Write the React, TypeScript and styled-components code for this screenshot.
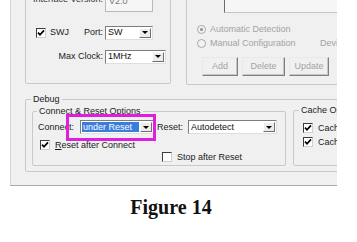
import React from "react";
import styled, { createGlobalStyle } from "styled-components";

const GlobalStyle = createGlobalStyle`
  html, body {
    margin: 0;
    padding: 0;
    background: #fff;
  }
  body {
    font-family: "Liberation Sans", Arial, sans-serif;
  }
`;

const Page = styled.div`
  width: 357px;
  height: 242px;
  overflow: hidden;
  background: #fff;
`;

const Shot = styled.div`
  margin-left: 10px;
  width: 326px;
  height: 185px;
  border-left: 1px solid #d6d6d6;
  border-bottom: 1px solid #a9a9a9;
  background: #f0f0f0;
  overflow: hidden;
  font-size: 9px;
  line-height: 11px;
  color: #1b1b1b;
`;

const TopRow = styled.div`
  display: flex;
  align-items: flex-start;
  gap: 15px;
  height: 85px;
  padding-left: 14px;
`;

const Panel = styled.div<{ $w: number; $h: number }>`
  flex: none;
  box-sizing: border-box;
  width: ${({ $w }) => $w}px;
  height: ${({ $h }) => $h}px;
  margin-top: -14px;
  border: 1px solid #c9c9c9;
  border-radius: 2px;
  display: flex;
  flex-direction: column;
`;

const FieldRow = styled.div<{ $top: number }>`
  display: grid;
  grid-template-columns: 77px auto;
  column-gap: 2px;
  align-items: center;
  height: 15px;
  margin-top: ${({ $top }) => $top}px;
`;

const RightLabel = styled.span`
  text-align: right;
  white-space: nowrap;
`;

const TopLabel = styled(RightLabel)`
  align-self: start;
  margin-top: -3px;
  color: #333;
`;

const SwjCell = styled.div`
  display: flex;
  align-items: center;
  padding-left: 10px;
  gap: 4px;
  white-space: nowrap;
`;

const Spacer = styled.span`
  flex: 1;
`;

const TextBox = styled.div<{ $w: number }>`
  box-sizing: border-box;
  width: ${({ $w }) => $w}px;
  height: 14px;
  border: 1px solid #b9b9b9;
  background: #f6f6f6;
  color: #777;
  padding: 0 3px;
  line-height: 4px;
`;

const Combo = styled.div<{ $w: number }>`
  position: relative;
  box-sizing: border-box;
  width: ${({ $w }) => $w}px;
  height: 14px;
  display: flex;
  align-items: stretch;
  background: #fff;
  border: 1px solid;
  border-color: #7c7c7c #dedede #dedede #7c7c7c;
`;

const ComboValue = styled.span<{ $selected?: boolean }>`
  flex: 1;
  margin: 1px;
  padding-left: 1px;
  display: flex;
  align-items: center;
  white-space: nowrap;
  background: ${({ $selected }) => ($selected ? "#3a7ddb" : "transparent")};
  color: ${({ $selected }) => ($selected ? "#fff" : "#111")};
`;

const ComboArrow = styled.span`
  flex: none;
  box-sizing: border-box;
  width: 12px;
  margin: 1px 1px 1px 0;
  display: flex;
  align-items: center;
  justify-content: center;
  background: #ececec;
  border: 1px solid;
  border-color: #fdfdfd #6f6f6f #6f6f6f #fdfdfd;

  &::after {
    content: "";
    border-left: 3px solid transparent;
    border-right: 3px solid transparent;
    border-top: 3px solid #000;
  }
`;

const Highlight = styled.div`
  position: absolute;
  left: -15px;
  top: -7px;
  width: 90px;
  height: 27px;
  box-sizing: border-box;
  border: 3px solid #e11ee0;
  pointer-events: none;
`;

const Box = styled.span`
  flex: none;
  box-sizing: border-box;
  width: 10px;
  height: 10px;
  background: #fff;
  border: 1px solid;
  border-color: #3c3c3c #cfcfcf #cfcfcf #3c3c3c;
  display: flex;
  align-items: center;
  justify-content: center;
`;

const TabEdge = styled.div`
  flex: none;
  margin-left: 37px;
  height: 26px;
  box-sizing: border-box;
  border-left: 1px solid #6c6c6c;
  border-bottom: 1px solid #c4c4c4;
  background: #f6f6f6;
`;

const RadioRow = styled.div<{ $top: number }>`
  display: grid;
  grid-template-columns: 9px 106px auto;
  column-gap: 4px;
  align-items: center;
  height: 11px;
  padding-left: 10px;
  margin-top: ${({ $top }) => $top}px;
  color: #a3a3a3;
  white-space: nowrap;
`;

const Radio = styled.span<{ $on?: boolean }>`
  box-sizing: border-box;
  width: 9px;
  height: 9px;
  border-radius: 50%;
  border: 1px solid #a7a7a7;
  background: #f3f3f3;
  display: flex;
  align-items: center;
  justify-content: center;

  &::after {
    content: "";
    display: ${({ $on }) => ($on ? "block" : "none")};
    width: 3px;
    height: 3px;
    border-radius: 50%;
    background: #8d8d8d;
  }
`;

const ButtonRow = styled.div`
  display: flex;
  gap: 4px;
  margin-top: 8px;
  padding-left: 15px;
`;

const Button = styled.div<{ $w: number }>`
  box-sizing: border-box;
  width: ${({ $w }) => $w}px;
  height: 19px;
  display: flex;
  align-items: center;
  justify-content: center;
  background: #f0f0f0;
  color: #a3a3a3;
  border: 1px solid;
  border-color: #e9e9e9 #7f7f7f #7f7f7f #e9e9e9;
  box-shadow: inset -1px -1px 0 #c6c6c6;
`;

const Group = styled.fieldset<{ $w: number; $h: number; $top?: number; $left?: number }>`
  flex: none;
  box-sizing: border-box;
  margin: ${({ $top = 0 }) => $top}px 0 0 ${({ $left = 0 }) => $left}px;
  padding: 0;
  min-width: 0;
  width: ${({ $w }) => $w}px;
  height: ${({ $h }) => $h}px;
  border: 1px solid #c9c9c9;
  border-radius: 2px;
`;

const Legend = styled.legend<{ $left: number }>`
  margin-left: ${({ $left }) => $left}px;
  padding: 0 2px;
  font-size: 9px;
  line-height: 11px;
  white-space: nowrap;
`;

const DebugBody = styled.div`
  display: flex;
  align-items: flex-start;
  gap: 7px;
  padding-left: 6px;
`;

const ConnectRow = styled.div`
  display: flex;
  align-items: center;
  height: 14px;
  margin-top: 3px;
  padding-left: 5px;
`;

const Label = styled.span<{ $w: number; $left?: number }>`
  flex: none;
  width: ${({ $w }) => $w}px;
  margin-left: ${({ $left = 0 }) => $left}px;
  white-space: nowrap;
`;

const CheckRow = styled.div<{ $top: number; $left: number }>`
  display: flex;
  align-items: center;
  gap: 5px;
  height: 10px;
  margin-top: ${({ $top }) => $top}px;
  padding-left: ${({ $left }) => $left}px;
  white-space: nowrap;
`;

const Key = styled.span`
  text-decoration: underline;
`;

const Caption = styled.div`
  width: 342px;
  margin-top: 10px;
  text-align: center;
  font-family: "Liberation Serif", "Times New Roman", serif;
  font-weight: bold;
  font-size: 20px;
  line-height: 22px;
  color: #111;
`;

const Check = () => (
  <svg width="8" height="8" viewBox="0 0 8 8">
    <path d="M1 3.6 L3 5.8 L7 1.4" fill="none" stroke="#000" strokeWidth="1.7" />
  </svg>
);

const CheckBox: React.FC<{ checked?: boolean }> = ({ checked }) => <Box>{checked && <Check />}</Box>;

const ComboBox: React.FC<{ w: number; value: string; selected?: boolean; marked?: boolean }> = ({
  w,
  value,
  selected,
  marked,
}) => (
  <Combo $w={w}>
    <ComboValue $selected={selected}>{value}</ComboValue>
    <ComboArrow />
    {marked && <Highlight />}
  </Combo>
);

export default function App() {
  return (
    <Page>
      <GlobalStyle />
      <Shot>
        <TopRow>
          <Panel $w={146} $h={98}>
            <FieldRow $top={10}>
              <TopLabel>Interface Version:</TopLabel>
              <TextBox $w={48}>V2.0</TextBox>
            </FieldRow>
            <FieldRow $top={13}>
              <SwjCell>
                <CheckBox checked />
                <span>SWJ</span>
                <Spacer />
                <span>Port:</span>
              </SwjCell>
              <ComboBox w={48} value="SW" />
            </FieldRow>
            <FieldRow $top={9}>
              <RightLabel>Max Clock:</RightLabel>
              <ComboBox w={61} value="1MHz" />
            </FieldRow>
          </Panel>
          <Panel $w={200} $h={99}>
            <TabEdge />
            <RadioRow $top={11}>
              <Radio $on />
              <span>Automatic Detection</span>
            </RadioRow>
            <RadioRow $top={3}>
              <Radio />
              <span>Manual Configuration</span>
              <span>Device Name</span>
            </RadioRow>
            <ButtonRow>
              <Button $w={36}>Add</Button>
              <Button $w={43}>Delete</Button>
              <Button $w={40}>Update</Button>
            </ButtonRow>
          </Panel>
        </TopRow>
        <Group $w={340} $h={78} $top={9} $left={14}>
          <Legend $left={5}>Debug</Legend>
          <DebugBody>
            <Group $w={254} $h={60} $top={1}>
              <Legend $left={4}>Connect &amp; Reset Options</Legend>
              <ConnectRow>
                <Label $w={42}>Connect:</Label>
                <ComboBox w={74} value="under Reset" selected marked />
                <Label $w={31} $left={3}>Reset:</Label>
                <ComboBox w={89} value="Autodetect" />
              </ConnectRow>
              <CheckRow $top={6} $left={7}>
                <CheckBox checked />
                <span>
                  <Key>R</Key>eset after Connect
                </span>
              </CheckRow>
              <CheckRow $top={2} $left={129}>
                <CheckBox />
                <span>Stop after Reset</span>
              </CheckRow>
            </Group>
            <Group $w={80} $h={61}>
              <Legend $left={5}>Cache Options</Legend>
              <CheckRow $top={7} $left={9}>
                <CheckBox checked />
                <span>Cache Code</span>
              </CheckRow>
              <CheckRow $top={4} $left={9}>
                <CheckBox checked />
                <span>Cache Memory</span>
              </CheckRow>
            </Group>
          </DebugBody>
        </Group>
      </Shot>
      <Caption>Figure 14</Caption>
    </Page>
  );
}
